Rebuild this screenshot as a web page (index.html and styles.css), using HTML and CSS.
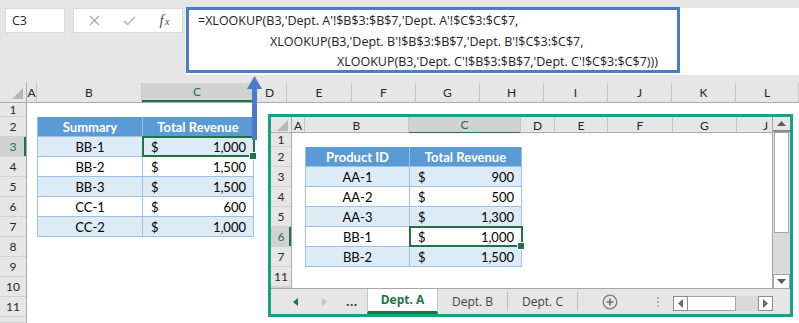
FILE: index.html
```html
<!DOCTYPE html>
<html lang="en">
<head>
    <meta charset="UTF-8">
    <title>XLOOKUP across sheets</title>
    <link rel="stylesheet" href="styles.css">
</head>
<body>
    <div class="app">
        <!-- formula bar -->
        <div class="formula-area">
            <div class="name-box">C3</div>
            <div class="fx-buttons">
                <span class="fx-btn">
                    <svg width="11" height="11" viewBox="0 0 11 11"><path d="M1 1L10 10M10 1L1 10" stroke="#a9a9a9" stroke-width="1.2"/></svg>
                </span>
                <span class="fx-btn">
                    <svg width="13" height="10" viewBox="0 0 13 10"><path d="M1 5L4.5 8.5L12 1" fill="none" stroke="#c2c2c2" stroke-width="1.8"/></svg>
                </span>
                <span class="fx-btn fx-label">f<span class="fx-x">x</span></span>
            </div>
            <div class="formula-bar">
                <div class="formula-box">
                    <div class="f-line">=XLOOKUP(B3,'Dept. A'!$B$3:$B$7,'Dept. A'!$C$3:$C$7,</div>
                    <div class="f-line f-line-2">XLOOKUP(B3,'Dept. B'!$B$3:$B$7,'Dept. B'!$C$3:$C$7,</div>
                    <div class="f-line f-line-3">XLOOKUP(B3,'Dept. C'!$B$3:$B$7,'Dept. C'!$C$3:$C$7)))</div>
                </div>
            </div>
        </div>

        <!-- summary sheet -->
        <div class="sheet">
            <div class="heads main-heads">
                <div class="corner"></div>
                <div>A</div><div>B</div><div class="sel">C</div><div>D</div><div>E</div><div>F</div>
                <div>G</div><div>H</div><div>I</div><div>J</div><div>K</div><div>L</div>
            </div>
            <div class="sheet-body main-body">
                <div class="rows main-rows">
                    <div>1</div><div>2</div><div class="sel">3</div><div>4</div><div>5</div><div>6</div>
                    <div>7</div><div>8</div><div>9</div><div>10</div><div>11</div><div></div>
                </div>
                <div class="cells main-cells">
                    <div class="xl-table main-table">
                        <div class="th">Summary</div><div class="th">Total Revenue</div>
                        <div class="td band">BB-1</div><div class="td band money active"><span>$</span><span>1,000</span></div>
                        <div class="td">BB-2</div><div class="td money"><span>$</span><span>1,500</span></div>
                        <div class="td band">BB-3</div><div class="td band money"><span>$</span><span>1,500</span></div>
                        <div class="td">CC-1</div><div class="td money"><span>$</span><span>600</span></div>
                        <div class="td band">CC-2</div><div class="td band money"><span>$</span><span>1,000</span></div>
                    </div>
                </div>
            </div>
        </div>

        <svg class="arrow" width="18" height="66" viewBox="0 0 18 66">
            <polygon points="1,15 8.5,2 16,15" fill="#4a7cc9"/>
            <rect x="6" y="14" width="5" height="52" fill="#4a7cc9"/>
        </svg>

        <!-- Dept. A sheet window -->
        <div class="popup">
            <div class="popup-main">
                <div class="mini">
                    <div class="heads mini-heads">
                        <div class="corner"></div>
                        <div>A</div><div>B</div><div class="sel">C</div><div>D</div><div>E</div><div>F</div><div>G</div><div class="last">J</div>
                    </div>
                    <div class="sheet-body mini-body">
                        <div class="rows mini-rows">
                            <div>1</div><div>2</div><div>3</div><div>4</div><div>5</div><div class="sel">6</div>
                            <div>7</div><div>11</div><div></div>
                        </div>
                        <div class="cells mini-cells">
                            <div class="xl-table mini-table">
                                <div class="th">Product ID</div><div class="th">Total Revenue</div>
                                <div class="td band">AA-1</div><div class="td band money"><span>$</span><span>900</span></div>
                                <div class="td">AA-2</div><div class="td money"><span>$</span><span>500</span></div>
                                <div class="td band">AA-3</div><div class="td band money"><span>$</span><span>1,300</span></div>
                                <div class="td">BB-1</div><div class="td money active"><span>$</span><span>1,000</span></div>
                                <div class="td band">BB-2</div><div class="td band money"><span>$</span><span>1,500</span></div>
                            </div>
                        </div>
                    </div>
                </div>
                <div class="vscroll">
                    <div class="vs-up"><svg width="9" height="5" viewBox="0 0 9 5"><polygon points="0,5 4.5,0 9,5" fill="#5a5a5a"/></svg></div>
                    <div class="vs-thumb"></div>
                    <div class="vs-track"></div>
                    <div class="vs-down"><svg width="9" height="5" viewBox="0 0 9 5"><polygon points="0,0 4.5,5 9,0" fill="#5a5a5a"/></svg></div>
                </div>
            </div>
            <div class="tab-bar">
                <div class="tab-nav">
                    <svg width="5" height="8" viewBox="0 0 5 8"><polygon points="5,0 0,4 5,8" fill="#217346"/></svg>
                    <svg class="nav-next" width="5" height="8" viewBox="0 0 5 8"><polygon points="0,0 5,4 0,8" fill="#c4c4c4"/></svg>
                    <span class="nav-more">...</span>
                </div>
                <div class="tab tab-active">Dept. A</div>
                <div class="tab">Dept. B</div>
                <div class="tab">Dept. C</div>
                <div class="tab-add">
                    <svg width="16" height="16" viewBox="0 0 16 16">
                        <circle cx="8" cy="8" r="6.8" fill="none" stroke="#7f7f7f" stroke-width="1.3"/>
                        <path d="M8 4.5V11.5M4.5 8H11.5" stroke="#6f6f6f" stroke-width="1.6"/>
                    </svg>
                </div>
                <div class="tab-split"><span></span><span></span><span></span></div>
                <div class="hscroll">
                    <div class="hs-btn"><svg width="5" height="9" viewBox="0 0 5 9"><polygon points="5,0 0,4.5 5,9" fill="#6a6a6a"/></svg></div>
                    <div class="hs-thumb"></div>
                    <div class="hs-track"></div>
                    <div class="hs-btn"><svg width="5" height="9" viewBox="0 0 5 9"><polygon points="0,0 5,4.5 0,9" fill="#6a6a6a"/></svg></div>
                </div>
            </div>
        </div>
    </div>
</body>
</html>
```

FILE: styles.css
```css
* {
    box-sizing: border-box;
}

body {
    margin: 0;
    width: 799px;
    height: 323px;
    overflow: hidden;
    background: #ffffff;
    font-family: Lato, "Liberation Sans", sans-serif;
    color: #000000;
}

.app {
    position: relative;
    width: 799px;
    height: 323px;
    overflow: hidden;
}

/* Строка формул */
.formula-area {
    display: flex;
    align-items: flex-start;
    height: 83px;
    padding-top: 8px;
    background: #e6e6e6;
    font-family: "Open Sans", "Noto Sans", sans-serif;
}

.name-box {
    width: 60px;
    height: 25px;
    margin-left: 5px;
    padding-left: 6px;
    background: #ffffff;
    border: 1px solid #dadada;
    font-size: 12.5px;
    line-height: 23px;
    color: #262626;
}

.fx-buttons {
    display: flex;
    align-items: center;
    width: 110px;
    height: 25px;
    margin-left: 8px;
    padding-left: 3px;
    background: #ffffff;
    border: 1px solid #dadada;
}

.fx-btn {
    display: flex;
    justify-content: center;
    align-items: center;
    width: 35px;
}

.fx-label {
    font-family: "Liberation Serif", serif;
    font-style: italic;
    font-size: 15px;
    color: #505050;
}

.fx-x {
    font-size: 11px;
    margin-left: 1px;
}

.formula-bar {
    flex: 1;
    height: 67px;
    margin-left: 3px;
    background: #ffffff;
}

.formula-box {
    width: 494px;
    height: 66px;
    margin-top: -1px;
    padding: 1px 0 0 9px;
    border: 3px solid #4a7cc9;
    font-size: 12.5px;
    line-height: 20.5px;
    color: #222222;
    white-space: nowrap;
}

.f-line-2 {
    padding-left: 72px;
}

.f-line-3 {
    padding-left: 139px;
}

/* Заголовки столбцов и строк */
.heads {
    display: grid;
    background: #e6e6e6;
    border-bottom: 1px solid #ababab;
    font-size: 12px;
    color: #262626;
}

.heads > div {
    display: flex;
    justify-content: center;
    align-items: center;
    border-right: 1px solid #c6c6c6;
}

.heads > .sel {
    background: #d2d2d2;
    color: #217346;
    border-bottom: 2px solid #217346;
}

.heads .corner {
    position: relative;
    border-right: 1px solid #ababab;
}

.heads .corner::after {
    content: "";
    position: absolute;
    right: 3px;
    bottom: 3px;
    width: 11px;
    height: 11px;
    background: #b7b7b7;
    clip-path: polygon(100% 0, 100% 100%, 0 100%);
}

.main-heads {
    height: 20px;
    grid-template-columns: 27px 10px 105px 111px 34px 65px repeat(6, 64px) 63px;
}

.sheet-body {
    display: grid;
}

.main-body {
    height: 220px;
    grid-template-columns: 27px 1fr;
}

.rows {
    display: grid;
    background: #e6e6e6;
    border-right: 1px solid #ababab;
    font-size: 12px;
    color: #262626;
}

.rows > div {
    display: flex;
    justify-content: center;
    align-items: center;
    border-bottom: 1px solid #d0d0d0;
}

.rows > .sel {
    background: #d2d2d2;
    color: #217346;
    box-shadow: inset -2px 0 0 #217346;
}

.main-rows {
    grid-template-rows: 14px repeat(10, 20px) 1fr;
}

.cells {
    background: #ffffff;
}

.main-cells {
    padding: 14px 0 0 10px;
}

/* Таблицы */
.xl-table {
    display: grid;
    grid-auto-rows: 20px;
    width: max-content;
    border-left: 1px solid #9bc2e6;
    font-size: 13px;
}

.main-table {
    grid-template-columns: 105px 111px;
}

.mini-table {
    grid-template-columns: 104px 112px;
}

.th {
    display: flex;
    justify-content: center;
    align-items: center;
    background: #5b9bd5;
    color: #ffffff;
    font-weight: bold;
    border-right: 1px solid #9bc2e6;
    border-bottom: 1px solid #9bc2e6;
}

.td {
    display: flex;
    justify-content: center;
    align-items: center;
    border-right: 1px solid #9bc2e6;
    border-bottom: 1px solid #9bc2e6;
    color: #000000;
}

.td.band {
    background: #ddebf7;
}

.td.money {
    justify-content: space-between;
    padding: 0 7px 0 8px;
}

.td.active {
    position: relative;
}

.td.active::after {
    content: "";
    position: absolute;
    left: -1px;
    top: -1px;
    right: -2px;
    bottom: -1px;
    border: 2px solid #217346;
}

.td.active::before {
    content: "";
    position: absolute;
    right: -4px;
    bottom: -4px;
    width: 6px;
    height: 6px;
    background: #217346;
    border: 1px solid #ffffff;
    z-index: 1;
}

.arrow {
    position: absolute;
    left: 246px;
    top: 74px;
}

/* Окно листа Dept. A */
.popup {
    position: absolute;
    left: 268px;
    top: 114px;
    width: 525px;
    height: 203px;
    display: flex;
    flex-direction: column;
    border: 3px solid #14a384;
    background: #ffffff;
}

.popup-main {
    display: flex;
    height: 172px;
}

.mini {
    display: flex;
    flex-direction: column;
    width: 502px;
    border-right: 1px solid #a6a6a6;
    border-bottom: 1px solid #a6a6a6;
}

.mini-heads {
    height: 16px;
    grid-template-columns: 21px 13px 104px 112px 34px 53px 65px 64px 1fr;
}

.mini-heads > .last {
    justify-content: flex-end;
    padding-right: 4px;
    border-right: none;
}

.mini-body {
    flex: 1;
    grid-template-columns: 21px 1fr;
}

.mini-rows {
    grid-template-rows: 14px repeat(6, 20px) 20px 1fr;
}

.mini-cells {
    padding: 14px 0 0 13px;
}

.vscroll {
    display: flex;
    flex-direction: column;
    width: 17px;
    background: #e6e6e6;
}

.vs-up {
    display: flex;
    justify-content: center;
    align-items: center;
    height: 15px;
    border-bottom: 2px solid #8c8c8c;
}

.vs-thumb {
    height: 101px;
    margin: 0 1px;
    background: #ffffff;
    border: 1px solid #a6a6a6;
}

.vs-track {
    flex: 1;
    background: #dadada;
}

.vs-down {
    display: flex;
    justify-content: center;
    align-items: center;
    height: 15px;
    background: #ffffff;
    border: 1px solid #a6a6a6;
}

/* Ярлыки листов */
.tab-bar {
    display: flex;
    flex: 1;
    background: #e6e6e6;
    font-family: "Open Sans", "Noto Sans", sans-serif;
    font-size: 12px;
}

.tab-nav {
    display: flex;
    align-items: center;
    width: 96px;
    padding-left: 22px;
}

.nav-next {
    margin-left: 24px;
}

.nav-more {
    margin-left: 19px;
    font-weight: bold;
    color: #1f3f2a;
    letter-spacing: 0.5px;
}

.tab {
    width: 70px;
    margin: 3px 0;
    text-align: center;
    line-height: 19px;
    color: #444444;
    border-right: 1px solid #bdbdbd;
}

.tab-active {
    width: 71px;
    margin: 0;
    line-height: 22px;
    background: #ffffff;
    color: #217346;
    font-weight: bold;
    border-left: 1px solid #c6c6c6;
    border-right: 1px solid #c6c6c6;
    border-bottom: 3px solid #217346;
}

.tab-add {
    display: flex;
    justify-content: center;
    align-items: center;
    width: 64px;
}

.tab-split {
    display: flex;
    flex-direction: column;
    justify-content: center;
    align-items: center;
    gap: 2px;
    width: 31px;
}

.tab-split span {
    width: 2px;
    height: 2px;
    background: #b3b3b3;
}

.hscroll {
    display: flex;
    width: 100px;
    height: 15px;
    margin-top: 7px;
}

.hs-btn {
    display: flex;
    justify-content: center;
    align-items: center;
    width: 15px;
    background: #ffffff;
    border: 1px solid #8c8c8c;
}

.hs-thumb {
    width: 48px;
    background: #ffffff;
    border-top: 1px solid #a6a6a6;
    border-bottom: 1px solid #a6a6a6;
    border-right: 1px solid #a6a6a6;
}

.hs-track {
    flex: 1;
    background: #dadada;
}
```
